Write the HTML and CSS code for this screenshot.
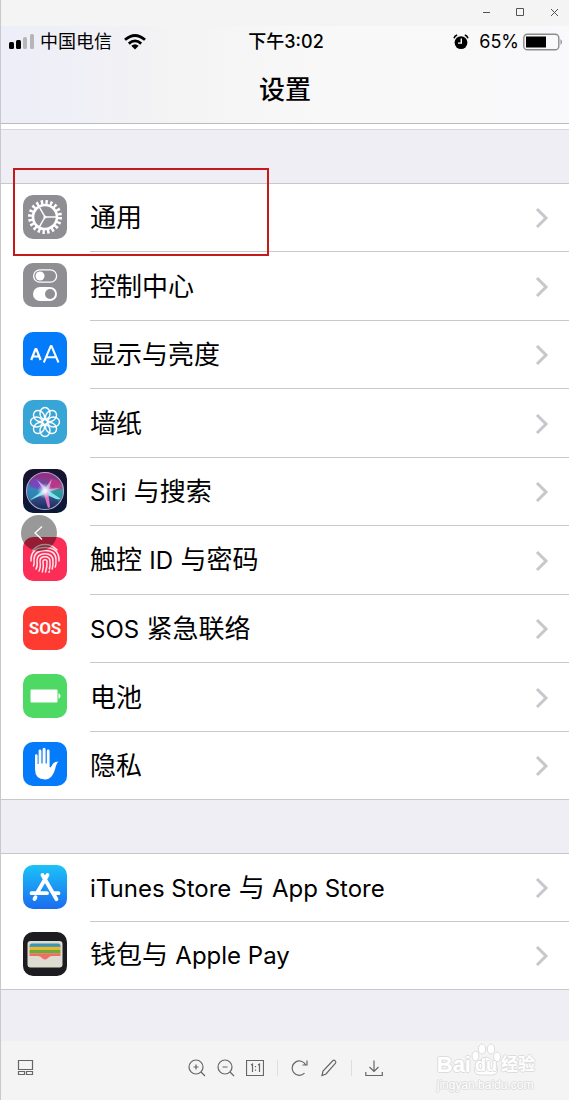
FILE: index.html
```html
<!DOCTYPE html>
<html lang="zh-CN">
<head>
<meta charset="utf-8">
<meta name="viewport" content="width=device-width, initial-scale=1">
<title>设置</title>
<link rel="stylesheet" href="styles.css">
</head>
<body>
<div class="window">
  <div class="titlebar">
    <button class="win-btn" aria-label="最小化"><svg width="9" height="9" viewBox="0 0 9 9"><path d="M1 4.5h7"/></svg></button>
    <button class="win-btn" aria-label="最大化"><svg width="9" height="9" viewBox="0 0 9 9"><path d="M.5.5h7v7h-7z"/></svg></button>
    <button class="win-btn" aria-label="关闭"><svg width="9" height="9" viewBox="0 0 9 9"><path d="M1 1l7 7M8 1l-7 7"/></svg></button>
  </div>

  <header class="header">
    <div class="status">
      <div class="status-left">
        <svg width="26" height="16" viewBox="0 0 26 16"><rect x="0" y="8" width="5" height="7" rx="1.5"/><rect x="7" y="6" width="5" height="9" rx="1.5"/><g fill="#b5b5ba"><rect x="14" y="3" width="4" height="12" rx="1.5"/><rect x="21" y="0" width="4" height="15" rx="1.5"/></g></svg>
        <span>中国电信</span>
        <svg class="wifi" width="22" height="16" viewBox="0 0 22 16"><g fill="none" stroke="#000" stroke-width="2.8"><path d="M1 5.8Q11-2.8 21 5.8"/><path d="M4.8 9.6Q11 4.2 17.2 9.6"/></g><path d="M7.3 11.8Q11 8.8 14.7 11.8L11 15.6z"/></svg>
      </div>
      <div class="status-time">下午3:02</div>
      <div class="status-right">
        <svg width="16" height="16" viewBox="0 0 16 16"><circle cx="8" cy="8.6" r="6.4"/><path d="M1 4.2Q1.800 1.700 4.200 1M15 4.200Q14.200 1.700 11.800 1" fill="none" stroke="#000" stroke-width="1.600"/><path d="M8.300 4.500v4.600H5" fill="none" stroke="#fff" stroke-width="1.400"/></svg>
        <span class="percent">65%</span>
        <svg width="40" height="18" viewBox="0 0 40 18"><rect x=".8" y="1.200" width="35" height="15.600" rx="3.600" fill="none" stroke="#8c8c8c" stroke-width="1.400"/><rect x="3" y="3.500" width="20" height="11"/><path d="M37.500 6q3 3 0 6z" fill="#8c8c8c"/></svg>
      </div>
    </div>
    <h1 class="title">设置</h1>
  </header>
  <div class="sheet-edge"></div>

  <main class="content">
    <nav class="group" aria-label="通用设置">
      <a class="row marked" href="#general">
        <svg class="icon" viewBox="0 0 44 44"><rect width="44" height="44" rx="10" fill="#8e8e93"/><g fill="none" stroke="#fff"><circle cx="22" cy="22" r="14.900" stroke-width="4.200" stroke-dasharray="2.400 2.281"/><circle cx="22" cy="22" r="12" stroke-width="2.600"/><path d="M22 22h11M22 22l-5.500-9.600M22 22l-5.500 9.600" stroke-width="1.500"/></g><circle cx="22" cy="22" r="1.600" fill="#fff"/></svg>
        <span class="label">通用</span>
        <svg class="chevron" viewBox="0 0 14 22"><path d="M2 2l9 9-9 9"/></svg>
      </a>
      <a class="row" href="#control">
        <svg class="icon" viewBox="0 0 44 44"><rect width="44" height="44" rx="10" fill="#8e8e93"/><rect x="10.600" y="6.800" width="23" height="12.400" rx="6.200" fill="none" stroke="#fff" stroke-width="1.300"/><circle cx="17" cy="13" r="4.500" fill="#fff"/><rect x="10" y="24" width="24" height="14" rx="7" fill="#fff"/><circle cx="27" cy="31" r="5" fill="#8e8e93"/></svg>
        <span class="label">控制中心</span>
        <svg class="chevron" viewBox="0 0 14 22"><path d="M2 2l9 9-9 9"/></svg>
      </a>
      <a class="row" href="#display">
        <svg class="icon" viewBox="0 0 44 44"><rect width="44" height="44" rx="10" fill="#047bfb"/><g fill="none" stroke="#fff" stroke-linejoin="round"><path d="M8.200 28l4.300-11h.8l4.300 11M9.600 24.500h6.500" stroke-width="2.200"/><path d="M20.800 30.500l7-16.500h.7l7 16.500M23 25.300h10.300" stroke-width="2"/></g></svg>
        <span class="label">显示与亮度</span>
        <svg class="chevron" viewBox="0 0 14 22"><path d="M2 2l9 9-9 9"/></svg>
      </a>
      <a class="row" href="#wallpaper">
        <svg class="icon" viewBox="0 0 44 44"><rect width="44" height="44" rx="10" fill="#37a5d5"/><g fill="none" stroke="#fff" stroke-width="1.400"><ellipse cx="22" cy="13.500" rx="5" ry="6"/><ellipse cx="22" cy="13.500" rx="5" ry="6" transform="rotate(45 22 22)"/><ellipse cx="22" cy="13.500" rx="5" ry="6" transform="rotate(90 22 22)"/><ellipse cx="22" cy="13.500" rx="5" ry="6" transform="rotate(135 22 22)"/><ellipse cx="22" cy="13.500" rx="5" ry="6" transform="rotate(180 22 22)"/><ellipse cx="22" cy="13.500" rx="5" ry="6" transform="rotate(225 22 22)"/><ellipse cx="22" cy="13.500" rx="5" ry="6" transform="rotate(270 22 22)"/><ellipse cx="22" cy="13.500" rx="5" ry="6" transform="rotate(315 22 22)"/><circle cx="22" cy="22" r="2.500"/></g></svg>
        <span class="label">墙纸</span>
        <svg class="chevron" viewBox="0 0 14 22"><path d="M2 2l9 9-9 9"/></svg>
      </a>
      <a class="row" href="#siri">
        <svg class="icon" viewBox="0 0 44 44">
          <defs>
            <linearGradient id="siri-bg" x1="0" y1="0" x2="0" y2="1"><stop offset="0" stop-color="#17132f"/><stop offset="1" stop-color="#0b1838"/></linearGradient>
            <linearGradient id="siri-orb" x1="0" y1="0" x2="0" y2="1"><stop offset="0" stop-color="#a0237e"/><stop offset=".45" stop-color="#5460a4"/><stop offset="1" stop-color="#122c5d"/></linearGradient>
            <radialGradient id="siri-glow"><stop offset="0" stop-color="#fff"/><stop offset=".3" stop-color="#e6f4ff" stop-opacity=".8"/><stop offset="1" stop-color="#a9c8f5" stop-opacity="0"/></radialGradient>
          </defs>
          <rect width="44" height="44" rx="10" fill="url(#siri-bg)"/>
          <circle cx="22" cy="22" r="18.500" fill="url(#siri-orb)"/>
          <path d="M22 22L5 15Q2 25 8 32z" fill="#2795bd" opacity=".75"/>
          <path d="M22 22L40 15Q42 25 36 32z" fill="#23b2a1" opacity=".75"/>
          <path d="M22 22L17 10Q7 8 7 18z" fill="#7946c2" opacity=".8"/>
          <path d="M22 22L27 10Q39 10 40 20z" fill="#d52f82" opacity=".7"/>
          <path d="M22 20L7 31l15-6 11 5 5 0-12-8z" fill="#7ce5ea"/>
          <path d="M20 22l5 17 2-1-2-16z" fill="#ea70bb"/>
          <path d="M21 22L14 11l9 7 6-8-3 10 11-1-11 4z" fill="#ddb5ed" opacity=".8"/>
          <circle cx="22" cy="22" r="8" fill="url(#siri-glow)"/>
          <circle cx="22" cy="22" r="18.500" fill="none" stroke="#b3a9cb" stroke-width="1.100"/>
        </svg>
        <span class="label"><span class="latin">Siri</span> 与搜索</span>
        <svg class="chevron" viewBox="0 0 14 22"><path d="M2 2l9 9-9 9"/></svg>
      </a>
      <a class="row" href="#touchid">
        <svg class="icon" viewBox="0 0 44 44"><rect width="44" height="44" rx="10" fill="#fc2e57"/><g fill="none" stroke="#ffe6ea" stroke-width="1.500" stroke-linecap="round"><path d="M10 13Q15 7.500 22 7.500T34 13"/><path d="M8 24Q7.500 10.500 22 10.500T36 24"/><path d="M10.500 29Q11.500 27 11 23Q11 13.600 22 13.600T33 23q.3 4-.8 7"/><path d="M13 32Q14.800 29 14 23.500Q14 16.700 22 16.700T30 24q.3 4-.8 8"/><path d="M16 34Q18 30 17 24Q17 19.700 22 19.700T27 24.500q.4 4-.6 7.500"/><path d="M19.300 35Q21 30 20 24.500Q20 22.700 22 22.700T24 24.500q.3 5-1.500 10.500"/><path d="M26 35.200l.4-1"/></g></svg>
        <span class="label">触控 <span class="latin">ID</span> 与密码</span>
        <svg class="chevron" viewBox="0 0 14 22"><path d="M2 2l9 9-9 9"/></svg>
      </a>
      <a class="row" href="#sos">
        <span class="icon sos">SOS</span>
        <span class="label"><span class="latin">SOS</span> 紧急联络</span>
        <svg class="chevron" viewBox="0 0 14 22"><path d="M2 2l9 9-9 9"/></svg>
      </a>
      <a class="row" href="#battery">
        <svg class="icon" viewBox="0 0 44 44"><rect width="44" height="44" rx="10" fill="#4dd964"/><rect x="7.500" y="15.500" width="27" height="13" rx="1" fill="#fff"/><path d="M35.500 19q4 3 0 6z" fill="#fff"/></svg>
        <span class="label">电池</span>
        <svg class="chevron" viewBox="0 0 14 22"><path d="M2 2l9 9-9 9"/></svg>
      </a>
      <a class="row" href="#privacy">
        <svg class="icon" viewBox="0 0 44 44"><rect width="44" height="44" rx="10" fill="#047bfb"/><path d="M12 27V13.500a1.300 1.300 0 0 1 2.600 0V22h1V9a1.400 1.400 0 0 1 2.800 0v12.500h1.200V7.200a1.500 1.500 0 0 1 3 0v14.300h1.200V9a1.400 1.400 0 0 1 2.800 0v16l1 .5 2.500-4q1.500-2 5.500-2-1.600 1.300-2.700 4.500Q30 37.500 22 37.500 12 37.500 12 27z" fill="#fff"/></svg>
        <span class="label">隐私</span>
        <svg class="chevron" viewBox="0 0 14 22"><path d="M2 2l9 9-9 9"/></svg>
      </a>
    </nav>

    <nav class="group" aria-label="商店与钱包">
      <a class="row" href="#store">
        <svg class="icon" viewBox="0 0 44 44"><defs><linearGradient id="store-bg" x1="0" y1="0" x2="0" y2="1"><stop offset="0" stop-color="#1cc2f8"/><stop offset="1" stop-color="#1b6cef"/></linearGradient></defs><rect width="44" height="44" rx="10" fill="url(#store-bg)"/><g fill="none" stroke="#fff" stroke-width="3.800" stroke-linecap="round"><path d="M24.500 10L14.300 27.500M19.500 10l14 24.200M12.500 32.200l-1 1.800M8.500 28.200h15.500M30.800 28.200h4.700"/></g></svg>
        <span class="label"><span class="latin">iTunes Store</span> 与 <span class="latin">App Store</span></span>
        <svg class="chevron" viewBox="0 0 14 22"><path d="M2 2l9 9-9 9"/></svg>
      </a>
      <a class="row" href="#wallet">
        <svg class="icon" viewBox="0 0 44 44"><rect width="44" height="44" rx="10" fill="#1d1c20"/><rect x="4.500" y="9" width="35" height="26.500" rx="3" fill="#dedbd0"/><path d="M6.500 15v-1q0-2.500 2.500-2.500h26q2.500 0 2.500 2.500v1z" fill="#3c94b6"/><path d="M6.500 14.800h31v3.400h-31z" fill="#e9b62f"/><path d="M6.500 18h31v3.300h-31z" fill="#68ad3a"/><path d="M6.500 21.200h31V24H29q-2.500 0-4 2-3 3-6 0-1.500-2-4-2H6.500z" fill="#f16e65"/></svg>
        <span class="label">钱包与 <span class="latin">Apple Pay</span></span>
        <svg class="chevron" viewBox="0 0 14 22"><path d="M2 2l9 9-9 9"/></svg>
      </a>
    </nav>
    <button class="prev" aria-label="上一张"><svg width="36" height="36" viewBox="0 0 36 36"><path d="M21 11.500L14 18l7 6.500"/></svg></button>
  </main>

  <footer class="toolbar">
    <button class="tool" aria-label="缩略图"><svg width="18" height="18" viewBox="0 0 18 18"><path d="M1.500 1.500h14v9h-14zM1.500 12.500h6v3h-6zM9.500 12.500h6v3h-6z"/></svg></button>
    <div class="tools">
      <button class="tool" aria-label="放大"><svg width="18" height="18" viewBox="0 0 18 18"><circle cx="8" cy="8" r="7"/><path d="M13 13l4 4M5.500 8h5M8 5.500v5"/></svg></button>
      <button class="tool" aria-label="缩小"><svg width="18" height="18" viewBox="0 0 18 18"><circle cx="8" cy="8" r="7"/><path d="M13 13l4 4M5.500 8h5"/></svg></button>
      <button class="tool" aria-label="实际大小"><svg width="18" height="18" viewBox="0 0 18 18"><path d="M.5 1.500h17v15H.5zM5 6l1.500-1v8M12 6l1.500-1v8M9.500 7v1.200M9.500 10.500v1.200"/></svg></button>
      <span class="sep"></span>
      <button class="tool" aria-label="旋转"><svg width="18" height="18" viewBox="0 0 18 18"><path d="M13.500 14.200A7.200 7.200 0 1 1 14.800 6M16 1.500V6h-4.500"/></svg></button>
      <button class="tool" aria-label="编辑"><svg width="18" height="18" viewBox="0 0 18 18"><path d="M2 16.500l1-4.500L13 1.500q1-.7 2.200.4 1.200 1.100.3 2.200L6 15z"/></svg></button>
      <span class="sep"></span>
      <button class="tool" aria-label="下载"><svg width="18" height="18" viewBox="0 0 18 18"><path d="M9 1.500v11M4.500 8L9 12.500 13.500 8M.8 13v3.500h16.500V13"/></svg></button>
    </div>
    <div class="brand">
      <div class="brand-name"><span>Bai</span><span class="paw"><svg width="30" height="34" viewBox="0 0 30 34"><ellipse cx="4.500" cy="13" rx="3.500" ry="4.800"/><ellipse cx="11" cy="6" rx="3.700" ry="5"/><ellipse cx="20" cy="6" rx="3.700" ry="5"/><ellipse cx="26" cy="14" rx="3.500" ry="4.800"/><path d="M15 14q4 0 7 5 5 4 4.500 8-.5 5-6 5h-11q-5.500 0-6-5Q3 23 8 19q3-5 7-5z"/></svg><span class="du">du</span></span><span class="brand-cn">经验</span></div>
      <div class="brand-url">jingyan.baidu.com</div>
    </div>
  </footer>
</div>
</body>
</html>
```
FILE: styles.css
```css
*, *::before, *::after { box-sizing: border-box; }

body {
  margin: 0;
  background: #f4f4f4;
  color: #000;
  font-family: Inter, "Noto Sans CJK SC", sans-serif;
}

button {
  display: grid;
  place-items: center;
  padding: 0;
  border: 0;
  background: none;
}

svg { display: block; }

.window {
  display: flex;
  flex-direction: column;
  min-height: 100vh;
  border-left: 1px solid #c9c9cb;
}

.titlebar {
  display: flex;
  justify-content: flex-end;
  align-items: center;
  gap: 16px;
  height: 26px;
  padding: 0 6px 2px 0;
}

.win-btn { width: 18px; height: 18px; }
.win-btn svg { fill: none; stroke: #555; }

.header {
  height: 98px;
  border-bottom: 1px solid #bcbcbe;
  background: linear-gradient(90deg, #eeeef8 0%, #efeff7 12%, #f3f3f4 28%, #f8f8f8 55%, #f9f9fb 100%);
}

.status {
  display: grid;
  grid-template-columns: 1fr auto 1fr;
  align-items: center;
  height: 32px;
  padding: 0 6px 0 8px;
  font-size: 18px;
  line-height: 24px;
}

.status-left, .status-right { display: flex; align-items: center; }
.status-left { gap: 5px; }
.wifi { margin-left: 7px; }
.status-time { font-weight: 500; }
.status-right { justify-content: flex-end; gap: 4px; }
.percent { margin-left: 6px; }

.title {
  margin: 0;
  padding-top: 14px;
  font-size: 26px;
  line-height: 36px;
  font-weight: 500;
  text-align: center;
}

.sheet-edge { height: 6px; background: #fff; border-bottom: 1px solid #d8d8dc; }

.content {
  position: relative;
  display: flex;
  flex: 1;
  flex-direction: column;
  gap: 53px;
  padding: 53px 0 51px;
  background: #efeef4;
}

.group {
  background: #fff;
  border-top: 1px solid #c8c7cc;
  border-bottom: 1px solid #c8c7cc;
}

.row {
  position: relative;
  display: flex;
  align-items: center;
  height: 68px;
  padding: 0 20px 0 22px;
  color: inherit;
  text-decoration: none;
}

.row:nth-child(even) { height: 69px; }
.row:last-child { height: 67px; }

.row:not(:last-child)::after {
  content: "";
  position: absolute;
  right: 0;
  bottom: 0;
  left: 89px;
  border-bottom: 1px solid #c8c7cc;
}

.marked::before {
  content: "";
  position: absolute;
  z-index: 1;
  top: -16px;
  left: 12px;
  width: 256px;
  height: 88px;
  border: 2px solid #c41a1c;
}

.icon { flex: none; width: 44px; height: 44px; margin-bottom: 3px; }

.sos {
  display: grid;
  place-items: center;
  border-radius: 10px;
  background: #fd3b30;
  color: #fff;
  font: bold 17px Roboto, sans-serif;
}

.label {
  flex: 1;
  margin-left: 23px;
  font-size: 26px;
  line-height: 36px;
  white-space: nowrap;
}

.latin { font-size: 24px; }

.chevron { width: 14px; height: 22px; fill: none; stroke: #c7c7cc; stroke-width: 3; }

.prev {
  position: absolute;
  top: 385px;
  left: 20px;
  width: 36px;
  height: 36px;
  border-radius: 50%;
  background: rgba(0, 0, 0, .4);
}

.prev svg { fill: none; stroke: #fff; stroke-width: 1.3; }

.toolbar {
  display: grid;
  grid-template-columns: 1fr auto 1fr;
  align-items: center;
  height: 59px;
  padding: 0 16px 6px;
  background: #f4f4f4;
}

.tool { width: 18px; height: 18px; }
.tool svg { fill: none; stroke: #666; stroke-width: 1.2; }
.tools { display: flex; align-items: center; gap: 11px; }
.sep { width: 1px; height: 16px; margin: 0 2px; background: #dedede; }

.brand {
  justify-self: end;
  margin-right: 18px;
  color: #fff;
  font-family: "Liberation Sans", "Noto Sans CJK SC", sans-serif;
  text-shadow: 1px 0 #ddd, -1px 0 #ddd, 0 1px #ddd, 0 -1px #ddd;
}

.brand-name { display: flex; align-items: flex-end; font-size: 22px; line-height: 24px; font-weight: bold; }
.paw { display: grid; }
.paw svg, .du { grid-area: 1 / 1; }
.paw svg { fill: #fff; stroke: #ddd; }
.du { align-self: end; justify-self: center; font-size: 18px; }
.brand-cn { font-size: 17px; }
.brand-url { font-size: 12px; line-height: 16px; }
```
